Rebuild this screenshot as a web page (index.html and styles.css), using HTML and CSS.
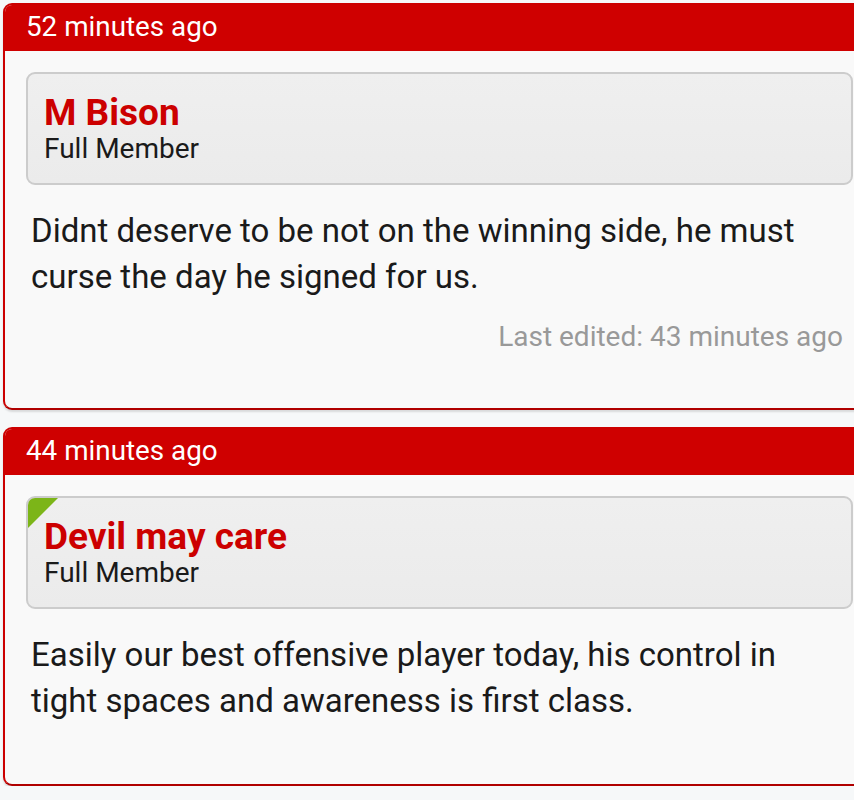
FILE: index.html
```html
<!DOCTYPE html>
<html>
<head>
  <title>Thread replies</title>
  <link rel="stylesheet" href="styles.css">
</head>
<body>
  <div class="posts">
    <div class="post">
      <div class="post-header">52 minutes ago</div>
      <div class="post-body">
        <div class="user-box">
          <div class="user-name">M Bison</div>
          <div class="user-title">Full Member</div>
        </div>
        <p class="message">Didnt deserve to be not on the winning side, he must curse the day he signed for us.</p>
        <div class="edited">Last edited: 43 minutes ago</div>
      </div>
    </div>

    <div class="post">
      <div class="post-header">44 minutes ago</div>
      <div class="post-body">
        <div class="user-box online">
          <div class="user-name">Devil may care</div>
          <div class="user-title">Full Member</div>
        </div>
        <p class="message">Easily our best offensive player today, his control in tight spaces and awareness is first class.</p>
      </div>
    </div>
  </div>
</body>
</html>
```

FILE: styles.css
```css
html {
  overflow: hidden;
}
body {
  margin: 0;
  padding: 3px 0 0 3px;
  font-family: Roboto, "Liberation Sans", sans-serif;
  background: #f6f8f9;
  color: #1a1a1a;
}
.posts {
  display: flex;
  flex-direction: column;
  gap: 17px;
  margin-right: -22px;
}
.post {
  background: #f9f9f9;
  border: 2px solid #cc0000;
  border-bottom-color: #b00000;
  border-radius: 9px;
  overflow: hidden;
  box-shadow: 0 2px 2px rgba(0,0,0,0.12);
}
.post-header {
  background: #cf0000;
  color: white;
  font-size: 27.8px;
  height: 47px;
  line-height: 46px;
  padding-left: 21px;
  margin-top: -1px;
}
.post-body {
  padding: 21px 21px 53px 21px;
}
.user-box {
  position: relative;
  overflow: hidden;
  height: 113px;
  box-sizing: border-box;
  padding: 19px 17px 0 16px;
  border: 2px solid #cccccc;
  border-radius: 9px;
  background: linear-gradient(#efefef, #ebebeb);
}
.user-box.online::before {
  content: "";
  position: absolute;
  top: 0;
  left: 0;
  border-top: 30px solid #7cb518;
  border-right: 30px solid transparent;
}
.user-name {
  color: #cc0000;
  font-weight: bold;
  font-size: 37px;
  line-height: 40px;
}
.user-title {
  font-size: 28px;
  line-height: 32px;
}
.message {
  margin: 23px 12px 7px 5px;
  font-size: 33px;
  line-height: 46px;
}
.edited {
  margin-top: 19px;
  text-align: right;
  padding-right: 10px;
  font-size: 28px;
  line-height: 36px;
  color: #999999;
}
```
